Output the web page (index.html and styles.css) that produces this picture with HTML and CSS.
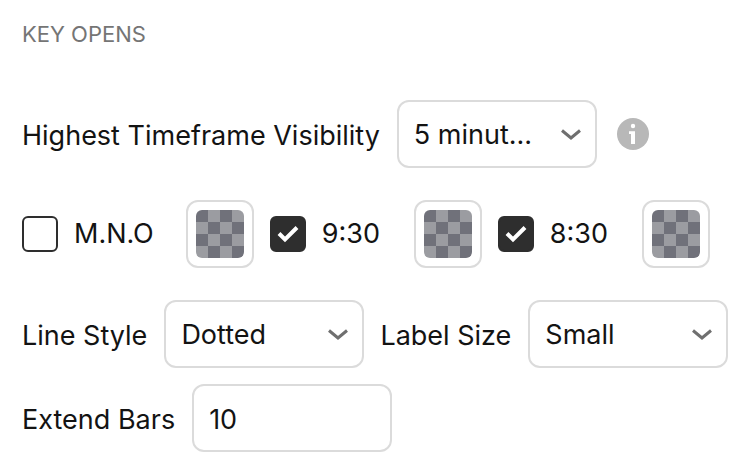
FILE: index.html
```html
<!DOCTYPE html>
<html lang="en">
<head>
<meta charset="utf-8">
<meta name="viewport" content="width=device-width, initial-scale=1">
<title>Key Opens</title>
<link rel="stylesheet" href="styles.css">
</head>
<body>
<form class="settings">
  <h2 class="title">KEY OPENS</h2>

  <div class="row">
    <label class="label" for="timeframe">Highest Timeframe Visibility</label>
    <span class="select">
      <select class="field" id="timeframe"><option>5 minut...</option></select>
      <svg class="chevron" viewBox="0 0 20 12" aria-hidden="true"><path d="M1 1.500l9 7.500l9-7.500"/></svg>
    </span>
    <button class="info" type="button" aria-label="Information">
      <svg viewBox="0 0 32 32" aria-hidden="true"><circle cx="16" cy="16" r="16" fill="#b8b8b8"/><circle cx="16" cy="8" r="2.200" fill="#fff"/><path d="M12 13.300h6V26h-4V16h-2z" fill="#fff"/></svg>
    </button>
  </div>

  <div class="row">
    <div class="toggle">
      <label class="check"><span class="box"><input type="checkbox"><svg viewBox="0 0 36 36" aria-hidden="true"><path d="M9 17.500l6 6L27 11.500"/></svg></span>M.N.O</label>
      <button class="swatch" type="button" aria-label="M.N.O color"><span class="checker"></span></button>
    </div>
    <div class="toggle">
      <label class="check"><span class="box"><input type="checkbox" checked><svg viewBox="0 0 36 36" aria-hidden="true"><path d="M9 17.500l6 6L27 11.500"/></svg></span>9:30</label>
      <button class="swatch" type="button" aria-label="9:30 color"><span class="checker"></span></button>
    </div>
    <div class="toggle">
      <label class="check"><span class="box"><input type="checkbox" checked><svg viewBox="0 0 36 36" aria-hidden="true"><path d="M9 17.500l6 6L27 11.500"/></svg></span>8:30</label>
      <button class="swatch" type="button" aria-label="8:30 color"><span class="checker"></span></button>
    </div>
  </div>

  <div class="row tight">
    <label class="label" for="line-style">Line Style</label>
    <span class="select">
      <select class="field" id="line-style"><option>Dotted</option></select>
      <svg class="chevron" viewBox="0 0 20 12" aria-hidden="true"><path d="M1 1.500l9 7.500l9-7.500"/></svg>
    </span>
    <label class="label" for="label-size">Label Size</label>
    <span class="select">
      <select class="field" id="label-size"><option>Small</option></select>
      <svg class="chevron" viewBox="0 0 20 12" aria-hidden="true"><path d="M1 1.500l9 7.500l9-7.500"/></svg>
    </span>
  </div>

  <div class="row">
    <label class="label" for="extend">Extend Bars</label>
    <input class="field" id="extend" type="text" inputmode="numeric" value="10">
  </div>
</form>
</body>
</html>
```

FILE: styles.css
```css
* {
  box-sizing: border-box;
}

body {
  margin: 0;
  background: #fff;
  color: #131313;
  font: 27px/36px Inter, "Liberation Sans", sans-serif;
}

.settings {
  padding: 18px 22px 14px;
}

.title {
  margin: 0 0 50px;
  color: #757575;
  font-size: 22px;
  font-weight: 400;
  line-height: 32px;
}

.row {
  display: flex;
  align-items: center;
  gap: 16px;
  margin-bottom: 32px;
}

.row.tight {
  margin-bottom: 16px;
}

.row:last-child {
  margin-bottom: 0;
}

.label,
.check {
  white-space: nowrap;
}

.label {
  padding: 4px 1px 0 0;
}

.select {
  position: relative;
  flex: none;
}

.field {
  display: block;
  width: 200px;
  height: 68px;
  padding: 2px 15px 0;
  border: 2px solid #dbdbdb;
  border-radius: 12px;
  background: #fff;
  color: inherit;
  font: inherit;
  appearance: none;
}

.chevron {
  position: absolute;
  top: 29px;
  right: 16px;
  width: 20px;
  height: 12px;
  fill: none;
  stroke: #6f6f6f;
  stroke-width: 3;
  pointer-events: none;
}

.info {
  width: 32px;
  height: 32px;
  margin-left: 4px;
  padding: 0;
  border: 0;
  background: none;
}

.info svg {
  display: block;
}

.toggle {
  display: flex;
  align-items: center;
  gap: 32px;
}

.check {
  display: flex;
  align-items: center;
  gap: 16px;
  min-width: 112px;
}

.box {
  position: relative;
  width: 36px;
  height: 36px;
}

.box input {
  display: block;
  width: 36px;
  height: 36px;
  margin: 0;
  border: 2px solid #2e2e2e;
  border-radius: 6px;
  background: #fff;
  appearance: none;
}

.box input:checked {
  background: #2e2e2e;
}

.box svg {
  position: absolute;
  inset: 0;
  display: none;
  fill: none;
  stroke: #fff;
  stroke-width: 4;
  pointer-events: none;
}

.box input:checked + svg {
  display: block;
}

.swatch {
  flex: none;
  width: 68px;
  height: 68px;
  padding: 8px;
  border: 2px solid #dbdbdb;
  border-radius: 12px;
  background: #fff;
}

.checker {
  display: block;
  height: 48px;
  border-radius: 6px;
  background: repeating-conic-gradient(#9b9ca1 0 25%, #70717a 0 50%) 0 0 / 24px 24px;
}
```
